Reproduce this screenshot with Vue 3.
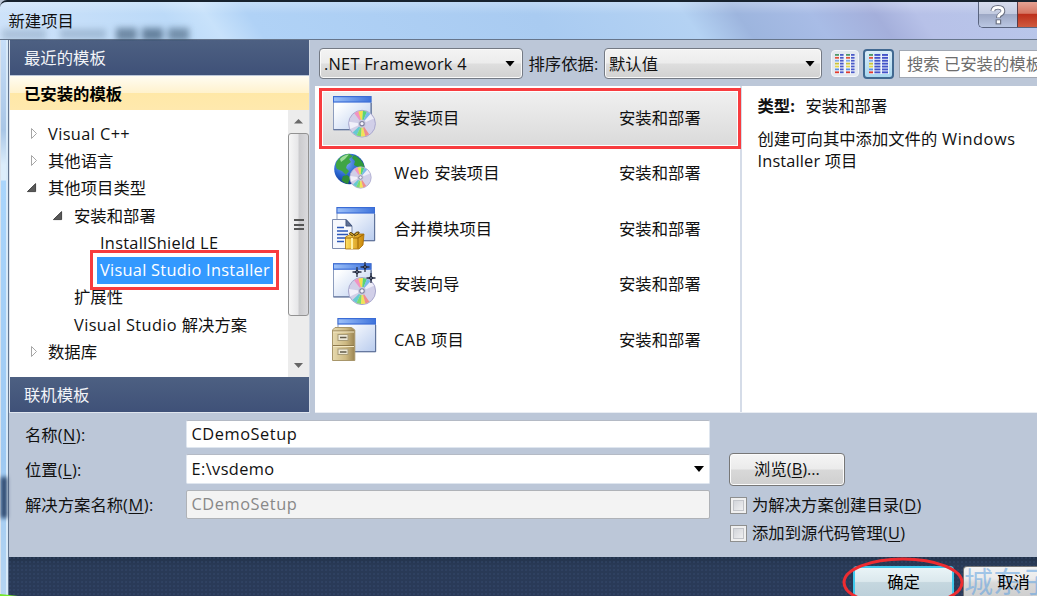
<script setup>
const tree = [
  { text: 'Visual C++', level: 0, arrow: 'closed' },
  { text: '其他语言', level: 0, arrow: 'closed' },
  { text: '其他项目类型', level: 0, arrow: 'open' },
  { text: '安装和部署', level: 1, arrow: 'open' },
  { text: 'InstallShield LE', level: 2 },
  { text: 'Visual Studio Installer', level: 2, selected: true },
  { text: '扩展性', level: 1 },
  { text: 'Visual Studio 解决方案', level: 1 },
  { text: '数据库', level: 0, arrow: 'closed' },
]
const projects = [
  { name: '安装项目', kind: 'setup', win: [1, 3], disc: [30, 30.7, 13.8] },
  { name: 'Web 安装项目', kind: 'web', disc: [28.5, 29.5, 11] },
  { name: '合并模块项目', kind: 'merge', win: [4.5, 3] },
  { name: '安装向导', kind: 'wizard', win: [1, 4.2], disc: [30, 32, 14] },
  { name: 'CAB 项目', kind: 'cab', win: [5.5, 3] },
]
const sparks = [[33, 8], [25, 13], [39, 19]]
const stripes = ['#4f9a6a', '#e0533c', '#7fa7e8', '#c9c23a', '#e3d84c', '#5b8fe0', '#e03a2c']

// Latin runs are tracked slightly wider than the CJK text around them.
const runs = (text) =>
  text.split(/([\x20-\x7e]+)/).filter(Boolean).map((t) => ({ t, en: /^[\x20-\x7e]/.test(t) }))
</script>

<template>
  <div class="window">
    <header class="titlebar">
      <svg class="ghost" width="210" height="17" viewBox="0 0 210 17">
        <g fill="#38536e">
          <rect x="2" y="3" width="44" height="11" opacity=".22" />
          <rect x="60" y="3" width="46" height="10" opacity=".25" />
          <rect x="116" y="2" width="21" height="13" opacity=".6" />
          <rect x="142" y="2" width="21" height="13" opacity=".65" />
          <rect x="168" y="2" width="21" height="13" opacity=".55" />
        </g>
      </svg>
      <span class="title">新建项目</span>
      <div class="caption">
        <div class="help">
          <svg width="18" height="22" viewBox="0 0 18 22" fill="none">
            <path d="M3.8 7.2Q4 3.2 9 3.2Q14 3.2 14 7Q14 9.2 11.4 10.6Q9.4 11.7 9.4 14" stroke="#6b7182" stroke-width="4.6" />
            <rect x="6.6" y="15.4" width="5.6" height="5" fill="#6b7182" />
            <path d="M3.8 7.2Q4 3.4 9 3.4Q13.8 3.4 13.8 7Q13.8 9 11.2 10.3Q9.4 11.3 9.4 13.4" stroke="#fff" stroke-width="2.9" />
            <rect x="7.8" y="16.3" width="3.2" height="3" fill="#fff" />
          </svg>
        </div>
        <div class="close"></div>
      </div>
    </header>

    <div class="body">
      <div class="frame"><i class="shade"></i><i class="green"></i></div>
      <div class="client">
        <div class="upper">
          <aside class="sidebar">
            <div class="nav first">最近的模板</div>
            <div class="nav active">已安装的模板</div>
            <div class="treewrap">
              <div class="tree">
                <div v-for="n in tree" :key="n.text" class="node" :class="'l' + n.level">
                  <svg class="arrow" width="14" height="14" viewBox="0 0 14 14">
                    <path v-if="n.arrow === 'closed'" d="M5.5 1.5L10.5 6.5L5.5 11.5Z" fill="#fff" stroke="#a6a6a6" />
                    <path v-if="n.arrow === 'open'" d="M9.6 2.6V10.6H1.4Z" fill="#595959" stroke="#2d2d2d" stroke-width=".8" />
                  </svg>
                  <span class="label" :class="{ sel: n.selected }"><span v-for="r in runs(n.text)" :key="r.t" :class="{ en: r.en }">{{ r.t }}</span></span>
                </div>
              </div>
              <div class="scroll">
                <svg width="21" height="22" viewBox="0 0 21 22"><path d="M6 13.5L10.5 9L15 13.5Z" fill="#6a6a6a" /></svg>
                <div class="thumb"><i></i><i></i><i></i></div>
                <svg class="down" width="21" height="22" viewBox="0 0 21 22"><path d="M6 8L15 8L10.5 13Z" fill="#666" /></svg>
              </div>
            </div>
            <div class="nav">联机模板</div>
          </aside>

          <section class="content">
            <div class="toolbar">
              <div class="combo c1"><span class="en net">.NET Framework 4</span><b class="caret"></b></div>
              <span class="sort">排序依据:</span>
              <div class="combo c2"><span>默认值</span><b class="caret"></b></div>
              <div class="tool t1">
                <svg width="20" height="20" viewBox="0 0 20 20">
                  <rect width="20" height="20" fill="#f3f5fa" />
                  <template v-for="(c, i) in stripes" :key="c">
                    <rect x="0" :y="i * 2.9" width="4" height="1.8" :fill="c" />
                    <rect x="5" :y="i * 2.9" width="3.6" height="1.8" fill="#4a5ac8" />
                    <rect x="11" :y="i * 2.9" width="4" height="1.8" :fill="c" />
                    <rect x="16" :y="i * 2.9" width="3.6" height="1.8" fill="#4a5ac8" />
                  </template>
                </svg>
              </div>
              <div class="tool t2">
                <svg width="20" height="20" viewBox="0 0 20 20">
                  <rect width="20" height="20" fill="#eef4fc" />
                  <template v-for="(c, i) in stripes" :key="c">
                    <rect x="0" :y="i * 2.9" width="4" height="1.9" :fill="c" />
                    <rect x="5.4" :y="i * 2.9" width="6" height="1.9" fill="#4353c8" />
                    <rect x="13" :y="i * 2.9" width="6" height="1.9" fill="#4353c8" />
                  </template>
                </svg>
              </div>
              <div class="search">搜索 已安装的模板</div>
            </div>

            <div class="panels">
              <div class="list">
                <div v-for="(p, i) in projects" :key="p.name" class="item">
                  <div v-if="i === 0" class="mark"></div>
                  <svg class="icon" width="46" height="50" viewBox="0 0 46 50">
                    <defs>
                      <linearGradient :id="'w' + i" x1="0" y1="0" x2="1" y2="1"><stop offset=".2" stop-color="#fdfeff" /><stop offset="1" stop-color="#b9ccee" /></linearGradient>
                      <linearGradient :id="'h' + i"><stop offset="0" stop-color="#9cc0f8" /><stop offset="1" stop-color="#3f74dc" /></linearGradient>
                      <radialGradient :id="'g' + i" cx=".35" cy=".3" r=".75"><stop offset="0" stop-color="#86b4f4" /><stop offset=".55" stop-color="#2965cf" /><stop offset="1" stop-color="#0c2f86" /></radialGradient>
                      <linearGradient :id="'c' + i"><stop offset="0" stop-color="#e6d9ae" /><stop offset=".6" stop-color="#cdb982" /><stop offset="1" stop-color="#9a8452" /></linearGradient>
                      <linearGradient :id="'y' + i"><stop offset="0" stop-color="#ffdf62" /><stop offset="1" stop-color="#c98508" /></linearGradient>
                    </defs>
                    <g v-if="p.win" :transform="`translate(${p.win[0]} ${p.win[1]})`">
                      <rect x=".5" y=".5" width="37.5" height="33" :fill="`url(#w${i})`" stroke="#8c9cbd" />
                      <rect x="0" y="0" width="38.5" height="6.6" fill="#3a6cd6" />
                      <rect x="1" y="1.2" width="36.5" height="4.2" :fill="`url(#h${i})`" />
                      <path d="M.5 33.8H38.2V7" fill="none" stroke="#566a93" />
                    </g>
                    <g v-if="p.kind === 'web'">
                      <circle cx="17.5" cy="21" r="15.3" :fill="`url(#g${i})`" />
                      <path d="M5 13Q9 6.5 17 5.7L21 8L17 11L19 14L15 17L14 20L17 23L14 27L10 23L5 21Q2.6 17 5 13Z" fill="#3fa544" />
                      <path d="M22 7Q31 11 32.6 20L29 24L26 19L22 17L23 13L20 10Z" fill="#319a3b" />
                      <path d="M11 28L15 27L19 30L17 33L16 36Q12 35 9.5 32.5Z" fill="#2f8c38" />
                      <path d="M8 11Q12 6.5 17 6.5L13 11L9 14Z" fill="#9ddc9a" />
                    </g>
                    <g v-if="p.disc" :transform="`translate(${p.disc[0]} ${p.disc[1]}) scale(${p.disc[2] / 14})`">
                      <circle r="13.6" fill="#d1cfe8" stroke="#a9a8cd" />
                      <path d="M0 0L-7.8-10.5Q-4.5-13-1.5-13Z" fill="#f194c2" />
                      <path d="M0 0L-3.6-12.5L1-13.1Z" fill="#f3e24b" />
                      <path d="M0 0L1-13.1L5-12Z" fill="#58d476" />
                      <path d="M0 0L5-12L8.6-9.8Z" fill="#78b9ea" />
                      <path d="M0 0L8.6-9.8L12-5.2Z" fill="#eeedf8" />
                      <path d="M0 0L-9.5 9L-5.5 12Z" fill="#67c9d2" />
                      <path d="M0 0L-5.5 12L-1 13.1Z" fill="#7bdb70" />
                      <path d="M0 0L-1 13.1L3.5 12.7Z" fill="#f2e355" />
                      <path d="M0 0L3.5 12.7L7.3 10.8Z" fill="#ef8d8c" />
                      <path d="M0 0L-13-2L-12 5.5Z" fill="#f1f0fa" />
                      <circle r="4" fill="#c8c8df" />
                      <circle r="2.2" fill="#f5f5fc" stroke="#7f809f" stroke-width="1.1" />
                    </g>
                    <g v-if="p.kind === 'merge'">
                      <path d="M.5 15.5H14L20 22V44.5H.5Z" fill="#f6f8fd" stroke="#7d8cae" />
                      <path d="M14 15.5V22H20Z" fill="#5f7193" stroke="#44577f" />
                      <path d="M5 23.5H12M5 27H16M5 30.5H16M5 34H14M5 37.5H12" stroke="#2c57b8" stroke-width="1.5" />
                      <path d="M13.5 33L19 30H32L31 41L27 45H13.5Z" :fill="`url(#y${i})`" stroke="#a56c06" stroke-width=".8" />
                      <path d="M13.5 34H26L31.5 30.5M26 34V44.5" fill="none" stroke="#9b6404" stroke-width="1" />
                      <path d="M20 34V45" stroke="#fff0a5" stroke-width="2" />
                      <path d="M21 32Q16 30 18 28.5Q20 28 22 31Q24 27 27 28Q28 30 22 32" fill="#d4a62b" stroke="#5a4110" />
                    </g>
                    <g v-if="p.kind === 'wizard'">
                      <g v-for="s in sparks" :key="s[0]" :transform="`translate(${s[0]} ${s[1]})`">
                        <path d="M0-5V5M-4.5 0H4.5" stroke="#2b3348" stroke-width="1.3" />
                        <path d="M0-2.6L2.6 0L0 2.6L-2.6 0Z" fill="#1f2537" />
                        <circle r=".7" fill="#aab4cc" />
                      </g>
                    </g>
                    <g v-if="p.kind === 'cab'">
                      <path d="M.5 15L3 12.5H19.5L22.8 15V45.5H.5Z" :fill="`url(#c${i})`" stroke="#a8966a" />
                      <path d="M1 16H22M1 30.5H22" stroke="#8d794c" />
                      <path d="M1 17H22M1 31.5H22" stroke="#f4e9c5" />
                      <rect x="6" y="19.5" width="10" height="6" fill="#eee9d7" stroke="#a89c78" />
                      <rect x="6" y="34" width="10" height="5.5" fill="#eee9d7" stroke="#a89c78" />
                      <path d="M8 22.5H14.5M8 37H14.5" stroke="#625b49" stroke-width="1.6" />
                    </g>
                  </svg>
                  <span class="name"><span v-for="r in runs(p.name)" :key="r.t" :class="{ en: r.en }">{{ r.t }}</span></span>
                  <span class="cat">安装和部署</span>
                </div>
              </div>
              <div class="detail">
                <p class="type"><strong>类型:</strong><span>安装和部署</span></p>
                <p class="desc">创建可向其中添加文件的<span class="en wide"> Windows</span><br><span class="en inst">Installer </span>项目</p>
              </div>
            </div>
          </section>
        </div>

        <div class="form">
          <div class="fields">
            <label>名称<span class="en">(<u>N</u>):</span></label><div class="input en wide">CDemoSetup</div>
            <label>位置<span class="en">(<u>L</u>):</span></label><div class="input drop en">E:\vsdemo<b class="caret"></b></div>
            <label class="up">解决方案名称<span class="en wide">(<u>M</u>):</span></label><div class="input off en wide">CDemoSetup</div>
          </div>
          <div class="options">
            <div class="browse">浏览(<u>B</u>)...</div>
            <div class="check"><i></i><span>为解决方案创建目录<span class="en">(<u>D</u>)</span></span></div>
            <div class="check"><i></i><span>添加到源代码管理<span class="en">(<u>U</u>)</span></span></div>
          </div>
        </div>

        <footer class="footer">
          <div class="btn ok">确定</div>
          <div class="btn cancel"><span class="stamp">城东子</span><span class="cap">取消</span></div>
          <svg class="ring" width="124" height="39" viewBox="0 0 124 39"><ellipse cx="62" cy="25.5" rx="59" ry="23.5" fill="none" stroke="#ee2c31" stroke-width="3" /></svg>
        </footer>
      </div>
    </div>
  </div>
</template>

<style>
html, body { overflow: hidden; background: #bcc7d8; }
</style>

<style scoped>
* { box-sizing: border-box; }
.window {
  width: 1037px; height: 596px; overflow: hidden; display: flex; flex-direction: column;
  font: 16.35px/22px "Open Sans", "Noto Sans CJK SC", sans-serif; color: #111; white-space: nowrap;
  background: #bcc7d8;
}
i { font-style: normal; display: block; }
u { text-underline-offset: 2px; text-decoration-thickness: 1px; }
.en { letter-spacing: .4px; white-space: pre; }
.en.wide { letter-spacing: .55px; }
.en.net { letter-spacing: .25px; }
.en.inst { letter-spacing: .15px; }
.l2 .en { letter-spacing: .28px; }
.titlebar {
  position: relative; height: 40px; flex: none; display: flex; justify-content: space-between;
  border-top: 2px solid #17222e; border-bottom: 1px solid #66758b; border-radius: 7px 0 0 0;
  background:
    linear-gradient(180deg, rgba(255,255,255,.25), rgba(255,255,255,0) 12px),
    linear-gradient(55deg, #cfe3fa 0, #bcdaf8 17%, #c8e2fb 21%, #b0d2f6 25%, #a9cbf1 52%, #b4d2f3 66%, #9db5de 71%, #a8bce6 78%, #a4afdb 84%, #b7c1e8 88%, #b9c7ea 100%);
}
.title { position: relative; padding: 8px 0 0 8.5px; line-height: 22px; }
.ghost { position: absolute; left: 0; top: 24px; filter: blur(3px); clip-path: inset(-8px 0 2px 0); }
.caption { display: flex; height: 26px; width: 59px; border: 1px solid #59647f; border-width: 0 0 1px 1px; border-radius: 0 0 0 5px; overflow: hidden; }
.help { width: 39px; display: flex; justify-content: center; align-items: center; border-right: 1px solid #573c48; background: linear-gradient(#d7dced, #c2cae0 48%, #9da8c5 50%, #bac7e2); }
.close { flex: 1; background: linear-gradient(#e5a394, #d67663 45%, #bd301c 50%, #cf5a3d); }
.body { flex: 1; display: flex; min-height: 0; }
.frame { position: relative; flex: none; width: 9px; border-right: 1px solid #62758f; background: linear-gradient(90deg, #d9e2ec 0 1px, transparent 1px 6px, #d8eaf9 6px), linear-gradient(#c6def8, #a9c6e6 90px, #dcedfb 125px, #dcedfb 140px, #a9d5fc 141px, #9ec9f2 420px, #b5d5f2); }
.shade { position: absolute; left: 1px; top: 437px; width: 6px; height: 41px; background: #243e63; filter: blur(2px); }
.green { position: absolute; left: 0; bottom: 0; width: 18px; height: 2px; background: #76e82b; clip-path: polygon(0 0, 100% 100%, 0 100%); z-index: 2; }
.client { flex: 1; min-width: 0; display: flex; flex-direction: column; }
.upper { height: 373px; flex: none; display: flex; }
.sidebar { width: 301px; flex: none; border: 1px solid #dfe5ee; border-top-width: 0; display: flex; flex-direction: column; border-right-color: #cfd7e3; }
.nav { height: 35px; line-height: 36px; padding-left: 14px; background: linear-gradient(#4d6082, #3f5178); color: #f2f4f8; flex: none; }
.nav.first { line-height: 37px; }
.nav.active { margin-top: 1px; height: 34px; line-height: 36px; background: linear-gradient(#fffcf2, #fff2cd 50%, #ffe8a7 50%, #ffe9ae); color: #000; font-weight: bold; }
.treewrap { flex: 1; display: flex; background: #fff; min-height: 0; }
.tree { flex: 1; padding-top: 10px; }
.node { height: 27.3px; display: flex; align-items: center; }
.node.l0 { padding-left: 16px; }
.node.l1 { padding-left: 42px; }
.node.l2 { padding-left: 68px; }
.arrow { flex: none; margin-right: 8px; }
.label.sel { position: relative; background: #3399ff; color: #fff; margin-left: -3px; padding: 0 3px; height: 27px; line-height: 27px; width: 176px; }
.label.sel::after { content: ""; position: absolute; inset: -7px -6px -6px -7px; border: 3px solid #f83c3f; }
.scroll { width: 21px; background: #ececec; display: flex; flex-direction: column; }
.thumb { height: 183px; margin: 1px 0 0 0; border: 1px solid #929292; border-radius: 3px; background: linear-gradient(90deg, #f7f7f7, #e7e7e9 45%, #cbcbce 55%, #dadadd); display: flex; flex-direction: column; align-items: center; justify-content: center; gap: 2.5px; }
.thumb i { width: 10px; height: 2px; background: #555; }
.down { margin-top: auto; }
.content { flex: 1; min-width: 0; padding-left: 5px; display: flex; flex-direction: column; }
.toolbar { height: 46px; flex: none; display: flex; align-items: center; padding: 1px 0 0 4px; }
.combo { height: 31px; border: 1px solid #747a84; border-radius: 4px; background: linear-gradient(#f3f3f3, #ececec 48%, #dedede 52%, #d1d1d1); box-shadow: inset 0 0 0 1px #fafafa; display: flex; align-items: center; justify-content: space-between; padding: 0 7px 0 4px; flex: none; }
.c1 { width: 204px; }
.c2 { width: 218px; padding-right: 6px; }
.caret { width: 10px; height: 6px; background: #000; clip-path: polygon(0 0, 100% 0, 50% 100%); }
.sort { width: 81px; padding-left: 5.5px; flex: none; }
.tool { flex: none; display: flex; align-items: center; justify-content: center; border-radius: 4px; }
.t1 { width: 28px; height: 27px; margin: 0 4px 0 9px; background: #e3e8f0; border: 1px solid #f3f6fa; }
.t2 { width: 31px; height: 30px; border: 2px solid #416991; background: linear-gradient(#dbedf8, #a9d8f0); margin-right: 5px; }
.search { flex: 1; min-width: 0; height: 28px; line-height: 26px; border: 1px solid #a1a8b3; border-right: 0; background: #fff; color: #6d6d6d; padding-left: 7px; }
.panels { flex: 1; display: flex; background: #fff; border-bottom: 1px solid #e9edf3; }
.list { width: 427px; flex: none; padding-top: 3.8px; border-right: 2px solid #d5dce8; }
.item { position: relative; height: 55.6px; padding-left: 17px; display: flex; align-items: center; }
.mark { position: absolute; left: 4px; top: -1.8px; width: 422px; height: 61px; border: 3px solid #f83c3f; background: linear-gradient(#f0f0f0, #dadada); box-shadow: inset 0 0 0 1px #fff; }
.icon { position: relative; flex: none; }
.name { position: relative; width: 241px; flex: none; padding-left: 16px; }
.cat { position: relative; }
.detail { padding: 9px 0 0 15.5px; }
.detail p { margin: 0; }
.type { display: flex; gap: 11px; }
.type strong { width: 37px; }
.detail .desc { margin-top: 11px; }
.form { height: 144px; flex: none; display: flex; }
.fields { width: 701px; flex: none; padding: 7px 0 0 16px; display: grid; grid-template-columns: 161px 524px; grid-template-rows: 28px 30px 29px; row-gap: 6px; align-content: start; align-items: center; }
.fields label { padding-top: 2px; }
.fields label.up { padding-top: 0; }
.input { position: relative; height: 100%; line-height: 26px; padding-left: 4.5px; background: #fff; border: 1px solid #dfe6ef; border-top-color: #b4bac5; border-radius: 2px; display: flex; justify-content: space-between; align-items: center; }
.input.drop { padding-right: 5px; }
.input.off { background: #f3f3f3; color: #888; border-color: #afb2b7; padding-bottom: 2px; }
.options { padding: 40px 0 0 19px; }
.browse { width: 116px; height: 33px; line-height: 31px; text-align: center; border: 1px solid #777; border-radius: 4px; background: linear-gradient(#f5f5f5, #ebebeb 48%, #d8d8d8 52%, #cfcfcf); box-shadow: inset 0 0 0 1px #fbfbfb; margin-bottom: 5px; }
.check { display: flex; align-items: center; height: 28px; gap: 5px; padding-left: 1px; }
.check i { width: 17px; height: 17px; border: 1px solid #8e8f8f; background: linear-gradient(135deg, #c9ccd2, #f8f8f8); box-shadow: inset 0 0 0 2px #f0f0f0, inset 0 0 0 3px #c3c5ca; }
.footer { position: relative; height: 39px; flex: none; display: flex; align-items: flex-start; padding: 9px 0 0 844px; background: radial-gradient(circle at 1px 1px, rgba(58, 80, 117, .35) 0 .7px, transparent 1px) 0 0 / 4px 4px, linear-gradient(#22324a, #293a56 8px, #2a3a59); }
.btn { flex: none; height: 30px; line-height: 32px; text-align: center; border-radius: 4px 4px 0 0; color: #000; }
.ok { width: 101px; border: 2px solid #3fc9ed; border-bottom: 0; background: linear-gradient(#e9f4f7, #dbe8ed 48%, #c5d7df 52%, #bdd0da); line-height: 28px; }
.cancel { position: relative; width: 101px; margin-left: 9px; border: 1px solid #777; border-bottom: 0; background: linear-gradient(#f3f3f3, #ebebeb 40%, #d8d8d8 55%, #cfcfcf); line-height: 30px; }
.cap { position: relative; }
.stamp { position: absolute; left: 0; top: 0; font-size: 29px; line-height: 29px; color: rgba(92, 160, 225, .55); }
.ring { position: absolute; left: 832px; top: 0; }
</style>
